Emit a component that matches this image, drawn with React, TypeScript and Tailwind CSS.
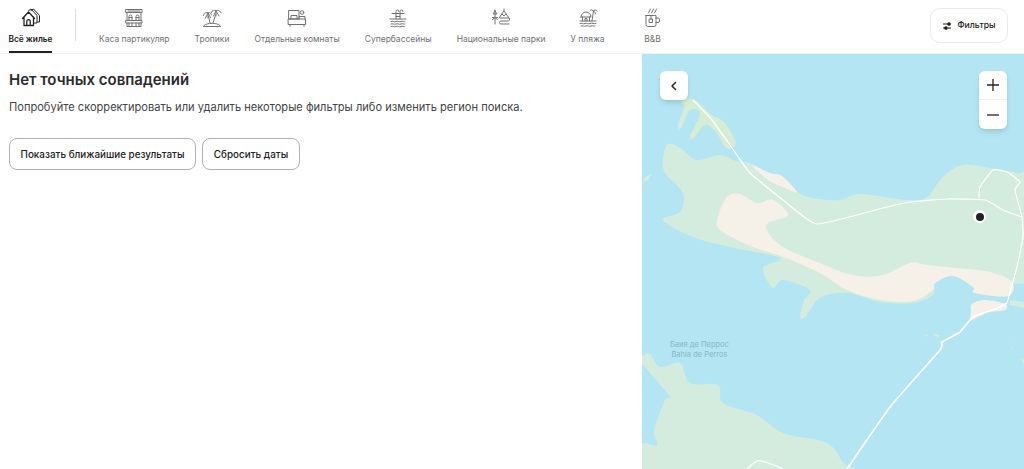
import { ReactNode } from 'react';

type Pt = [number, number];

// catmull-rom curve through every point, closed for land, open for roads
function curve(pts: Pt[], closed = true, k = 6) {
  const n = pts.length;
  const at = (i: number) => (closed ? pts[(i + n) % n] : pts[Math.max(0, Math.min(n - 1, i))]);
  let d = `M${pts[0][0]} ${pts[0][1]}`;
  for (let i = 0; i < (closed ? n : n - 1); i++) {
    const [p0, p1, p2, p3] = [at(i - 1), at(i), at(i + 1), at(i + 2)];
    const c1 = [p1[0] + (p2[0] - p0[0]) / k, p1[1] + (p2[1] - p0[1]) / k];
    const c2 = [p2[0] - (p3[0] - p1[0]) / k, p2[1] - (p3[1] - p1[1]) / k];
    d += ` C${c1[0]} ${c1[1]} ${c2[0]} ${c2[1]} ${p2[0]} ${p2[1]}`;
  }
  return closed ? d + 'Z' : d;
}

const island: Pt[] = [
  [663, 160], [666, 146], [672, 144], [683, 150], [697, 160], [720, 155], [736, 161], [750, 163], [773, 178], [797, 192], [813, 198],
  [840, 200], [860, 194], [907, 200], [927, 197], [942, 178], [962, 165], [990, 168], [1017, 173], [1030, 180], [1030, 272], [1013, 285],
  [1008, 296], [975, 293], [973, 287], [953, 276], [935, 283], [933, 295], [913, 303], [880, 302], [847, 293], [820, 298], [806, 316], [800, 318], [804, 300], [810, 290],
  [783, 280], [773, 288], [763, 268], [780, 258], [730, 247], [693, 237], [663, 220], [680, 212], [683, 193], [665, 173],
];

const sand: Pt[] = [
  [727, 197], [740, 194], [757, 203], [773, 200], [788, 215], [768, 223], [768, 232], [783, 247], [817, 262], [853, 275], [883, 275],
  [910, 263], [927, 265], [957, 268], [990, 272], [1012, 282], [1008, 296], [975, 293], [973, 287], [953, 276], [935, 283], [933, 290],
  [913, 301], [880, 300], [847, 290], [820, 273], [783, 257], [753, 247], [720, 230], [718, 217],
];

const shore: Pt[] = [
  [752, 165], [770, 173], [782, 176], [797, 192], [785, 188], [768, 180],
];

const north: Pt[] = [
  [682, 100], [695, 100], [712, 115], [724, 122], [735, 140], [733, 148], [725, 147], [716, 132], [705, 125], [694, 138], [690, 136],
  [700, 114], [690, 110], [681, 128], [678, 125], [684, 108],
];

const southWest: Pt[] = [
  [641, 357], [650, 354], [660, 367], [680, 363], [690, 383], [718, 385], [723, 403], [757, 415], [783, 433], [827, 443], [843, 463],
  [850, 475], [641, 475], [641, 445], [657, 445], [654, 430], [665, 400], [670, 397], [650, 373], [641, 362],
];

const town: Pt[] = [
  [972, 304], [985, 300], [1005, 304], [1005, 310], [990, 312], [978, 317], [971, 320], [971, 310],
];

const mainRoad: Pt[] = [
  [693, 100], [712, 120], [732, 148], [750, 173], [783, 200], [817, 224], [887, 207], [910, 202], [947, 199], [985, 200], [1003, 210], [1022, 217],
];
const loopRoad: Pt[] = [
  [979, 198], [980, 187], [993, 170], [1007, 172], [1020, 182], [1015, 190], [1022, 217], [1023, 237], [1017, 267], [1007, 303],
];
const causeway: Pt[] = [
  [1007, 303], [998, 308], [973, 317], [960, 332], [942, 342], [940, 350], [890, 407], [847, 469],
];

function Icon({ children, dark }: { children: ReactNode; dark?: boolean }) {
  return (
    <svg
      viewBox="0 0 20 20"
      fill="none"
      stroke={dark ? '#222222' : '#717171'}
      strokeWidth="1"
      strokeLinecap="round"
      strokeLinejoin="round"
      className="w-5 h-5 shrink-0"
    >
      {children}
    </svg>
  );
}

const tabs: { label: string; icon: ReactNode }[] = [
  {
    label: 'Каса партикуляр',
    icon: (
      <Icon>
        <path d="M2 1.500h16v3H2zM2 12.500h16v2.500H2zM3 4.500v8M17 4.500v8M3 15v3.500h14V15" />
        <path d="M5 12.500V8.500a1.500 1.500 0 0 1 3 0v4M12 12.500V8.500a1.500 1.500 0 0 1 3 0v4M5 9.500h3M12 9.500h3" />
        <path d="M5 18v-3M8 18v-3M12 18v-3M15 18v-3M4 3h12" />
      </Icon>
    ),
  },
  {
    label: 'Тропики',
    icon: (
      <Icon>
        <path d="M6 5c-2-1-4 0-4.500 2.500M6 5c2-1 3 0 3.500 2M6 5 3.500 10M6 5l2.500 4.500M6 5 6 10" />
        <path d="M14 3c-2-1.500-4-.5-4.500 1.500M14 3c2-1.500 4-.5 5 2M14 3l-2.500 5M14 3l3 5M14 3v5" />
        <path d="M6.500 8 8 15M13.500 7 11 15M2 17.500c3-3 13-3 16 0M1.500 18.500h17" />
      </Icon>
    ),
  },
  {
    label: 'Отдельные комнаты',
    icon: (
      <Icon>
        <path d="M2 2.500h10v8.500H2zM4 11V7.500h6V11" />
        <circle cx="15" cy="4.500" r="1.800" />
        <path d="M1.500 11h17v5.500h-17zM12 11V8.500h6V11M3 16.500v2M17 16.500v2" />
      </Icon>
    ),
  },
  {
    label: 'Супербассейны',
    icon: (
      <Icon>
        <path d="M8 11V3.500a1.500 1.500 0 0 1 3 0M12 11V3.500a1.500 1.500 0 0 1 3 0M4 5.500h12M8 8.500h4" />
        <path d="M2 11h16M3 13.500c2-1 3 1 5 0s3 1 5 0 3 1 4 0M3 16c2-1 3 1 5 0s3 1 5 0 3 1 4 0M3 18.500c2-1 3 1 5 0s3 1 5 0 3 1 4 0" />
      </Icon>
    ),
  },
  {
    label: 'Национальные парки',
    icon: (
      <Icon>
        <path d="M4 2v14M4 3 2 6h4L4 3ZM1.500 9.500h5M1.500 11.500 4 9.500l2.500 2" />
        <path d="M8 10l5-7 5 7M11 6l2 2 2-2" />
        <path d="M9 10h9c1 0 1 3-1 3H10c-2 0-2 3 0 3h8M13 3V1" />
      </Icon>
    ),
  },
  {
    label: 'У пляжа',
    icon: (
      <Icon>
        <path d="M3 9a5 5 0 0 1 10 0H3ZM4.500 9v4M11.500 9v4M7 13v-2.500h2V13" />
        <path d="M15.500 3 14 13M15.500 3c-1-1.500-2.500-1.500-3.500-.5M15.500 3c1-1.500 2.500-1.500 3.500 0M15.500 3c1 .5 2 1.500 2 3" />
        <path d="M2 13h16M2 15.500c2-1 3 1 5 0s3 1 5 0 4 1 6 0M3 18c2-1 3 1 5 0s3 1 5 0 3 1 4 0" />
      </Icon>
    ),
  },
  {
    label: 'B&B',
    icon: (
      <Icon>
        <path d="M3 7.500h10v9a2 2 0 0 1-2 2H5a2 2 0 0 1-2-2v-9ZM13 10h2a1.500 1.500 0 0 1 1.500 1.500v1.500a1.500 1.500 0 0 1-1.500 1.500h-2" />
        <path d="M6.500 11h3v3.500h-3zM8 11V8M5.500 5l2-4M8.500 5l2-4M11.500 5l2-4" />
      </Icon>
    ),
  },
];

function TopBar() {
  return (
    <div className="flex h-[54px] shrink-0 items-stretch border-b border-[#f0f0f0] bg-white">
      <div className="flex items-stretch pl-[9px]">
        <div className="relative flex w-[43px] flex-col items-center pt-[8px]">
          <Icon dark>
            <path d="M1.500 10.500 7.500 4l6 6.500M3 9v8.500h9.500V9M5.800 17.500v-4.200a1.700 1.700 0 0 1 3.400 0v4.200" strokeWidth="1.300" />
            <path d="M7.500 2.700 10 1l6 6.500V15h-2.500M10 2.500 12.500 1l6 6.500V14h-2" strokeWidth="1" />
          </Icon>
          <span className="mt-[5px] whitespace-nowrap text-[8.300px] leading-[13px] font-semibold text-[#222222]">Всё жилье</span>
          <div className="absolute bottom-0 left-0 h-[2px] w-full bg-[#222222]" />
        </div>
        <div className="mx-[23px] my-[9px] mb-[12px] w-px bg-[#dddddd]" />
        <div className="flex items-start gap-[25px] pt-[8px]">
          {tabs.map((t) => (
            <div key={t.label} className="flex flex-col items-center last:ml-[13px]">
              {t.icon}
              <span className="mt-[5px] whitespace-nowrap text-[8.500px] leading-[13px] text-[#717171]">{t.label}</span>
            </div>
          ))}
        </div>
      </div>
      <div className="ml-auto pt-[8px] pr-[16px]">
        <button className="flex h-[35px] w-[78px] items-center justify-center gap-[5px] rounded-[10px] border border-[#ebebeb] bg-white">
          <svg viewBox="0 0 10 10" className="h-[10px] w-[10px]" fill="none" stroke="#222222" strokeWidth="1.100">
            <path d="M1 3h4.500M1 7h2" />
            <path d="M6 7h3" />
            <circle cx="7" cy="3" r="1.300" fill="#222222" />
            <circle cx="4" cy="7" r="1.300" fill="#222222" />
          </svg>
          <span className="text-[8.600px] font-medium text-[#222222]">Фильтры</span>
        </button>
      </div>
    </div>
  );
}

function NoResults() {
  return (
    <div className="w-[642px] shrink-0 bg-white pt-[16px] pl-[9px]">
      <h1 className="text-[15px] leading-[20px] font-semibold text-[#2b2b2b]">Нет точных совпадений</h1>
      <p className="mt-[8px] whitespace-nowrap text-[11.100px] leading-[18px] text-[#444444]">
        Попробуйте скорректировать или удалить некоторые фильтры либо изменить регион поиска.
      </p>
      <div className="mt-[22px] flex gap-[6px]">
        <button className="h-[32px] w-[187px] rounded-lg border border-[#b0b0b0] bg-white text-[9.900px] font-medium text-[#222222]">
          Показать ближайшие результаты
        </button>
        <button className="h-[32px] w-[98px] rounded-lg border border-[#b0b0b0] bg-white text-[9.900px] font-medium text-[#222222]">
          Сбросить даты
        </button>
      </div>
    </div>
  );
}

function MapPane() {
  return (
    <div className="relative flex-1 overflow-hidden bg-[#b3e5f3]">
      <svg viewBox="642 54 382 415" className="block h-full w-full" fill="none">
        <path d={curve(island)} fill="#d3ecdd" />
        <path d={curve(north)} fill="#d6ecd4" />
        <path d={curve(southWest)} fill="#d3ecdd" />
        <path d={curve(sand)} fill="#f5f0e8" />
        <path d={curve(shore)} fill="#f5f0e8" />
        <path d={curve(town)} fill="#f5f0e8" />
        <path d="M644 178l8-5-3 6-5 4zM1010 335l2 12 3 4-3-2zM1020 358l4 2v4zM922 334l6 1-1 2zM933 333l8 3-5 1zM1010 300l14 2v6l-14-3z" fill="#d3ecdd" />
        <path d={curve(mainRoad, false, 14)} stroke="#ffffff" strokeWidth="1.200" />
        <path d={curve(loopRoad, false, 14)} stroke="#ffffff" strokeWidth="1.200" />
        <path d={curve(causeway, false, 14)} stroke="#ffffff" strokeWidth="1.700" />
        <path d="M747 469q6-6 10-8t26 8" stroke="#ffffff" strokeWidth="1.200" />
      </svg>

      <div className="absolute top-[286px] left-[28px] text-center text-[7.500px] leading-[9.500px] text-[#86b7c7]">
        <div>Баия де Перрос</div>
        <div>Bahía de Perros</div>
      </div>

      <div className="absolute top-[156px] left-[331px] flex h-[13px] w-[13px] items-center justify-center rounded-full bg-white">
        <div className="h-[8px] w-[8px] rounded-full bg-[#222222]" />
      </div>

      <button className="absolute top-[17px] left-[18px] flex h-[29px] w-[28px] items-center justify-center rounded-md bg-white shadow-md">
        <svg viewBox="0 0 10 10" className="h-[10px] w-[10px]" fill="none" stroke="#222222" strokeWidth="1.500" strokeLinecap="round" strokeLinejoin="round">
          <path d="M6.500 1.500 3 5l3.500 3.500" />
        </svg>
      </button>

      <div className="absolute top-[17px] left-[337px] flex w-[28px] flex-col rounded-md bg-white shadow-md">
        <button className="flex h-[29px] items-center justify-center border-b border-[#eeeeee]">
          <svg viewBox="0 0 14 14" className="h-[14px] w-[14px]" stroke="#222222" strokeWidth="1.300">
            <path d="M1 7h12M7 1v12" />
          </svg>
        </button>
        <button className="flex h-[29px] items-center justify-center">
          <svg viewBox="0 0 14 14" className="h-[14px] w-[14px]" stroke="#222222" strokeWidth="1.300">
            <path d="M1 7h12" />
          </svg>
        </button>
      </div>
    </div>
  );
}

export default function App() {
  return (
    <div className="flex h-[469px] w-full flex-col overflow-hidden bg-white font-['Inter',sans-serif]">
      <TopBar />
      <div className="flex min-h-0 flex-1">
        <NoResults />
        <MapPane />
      </div>
    </div>
  );
}
